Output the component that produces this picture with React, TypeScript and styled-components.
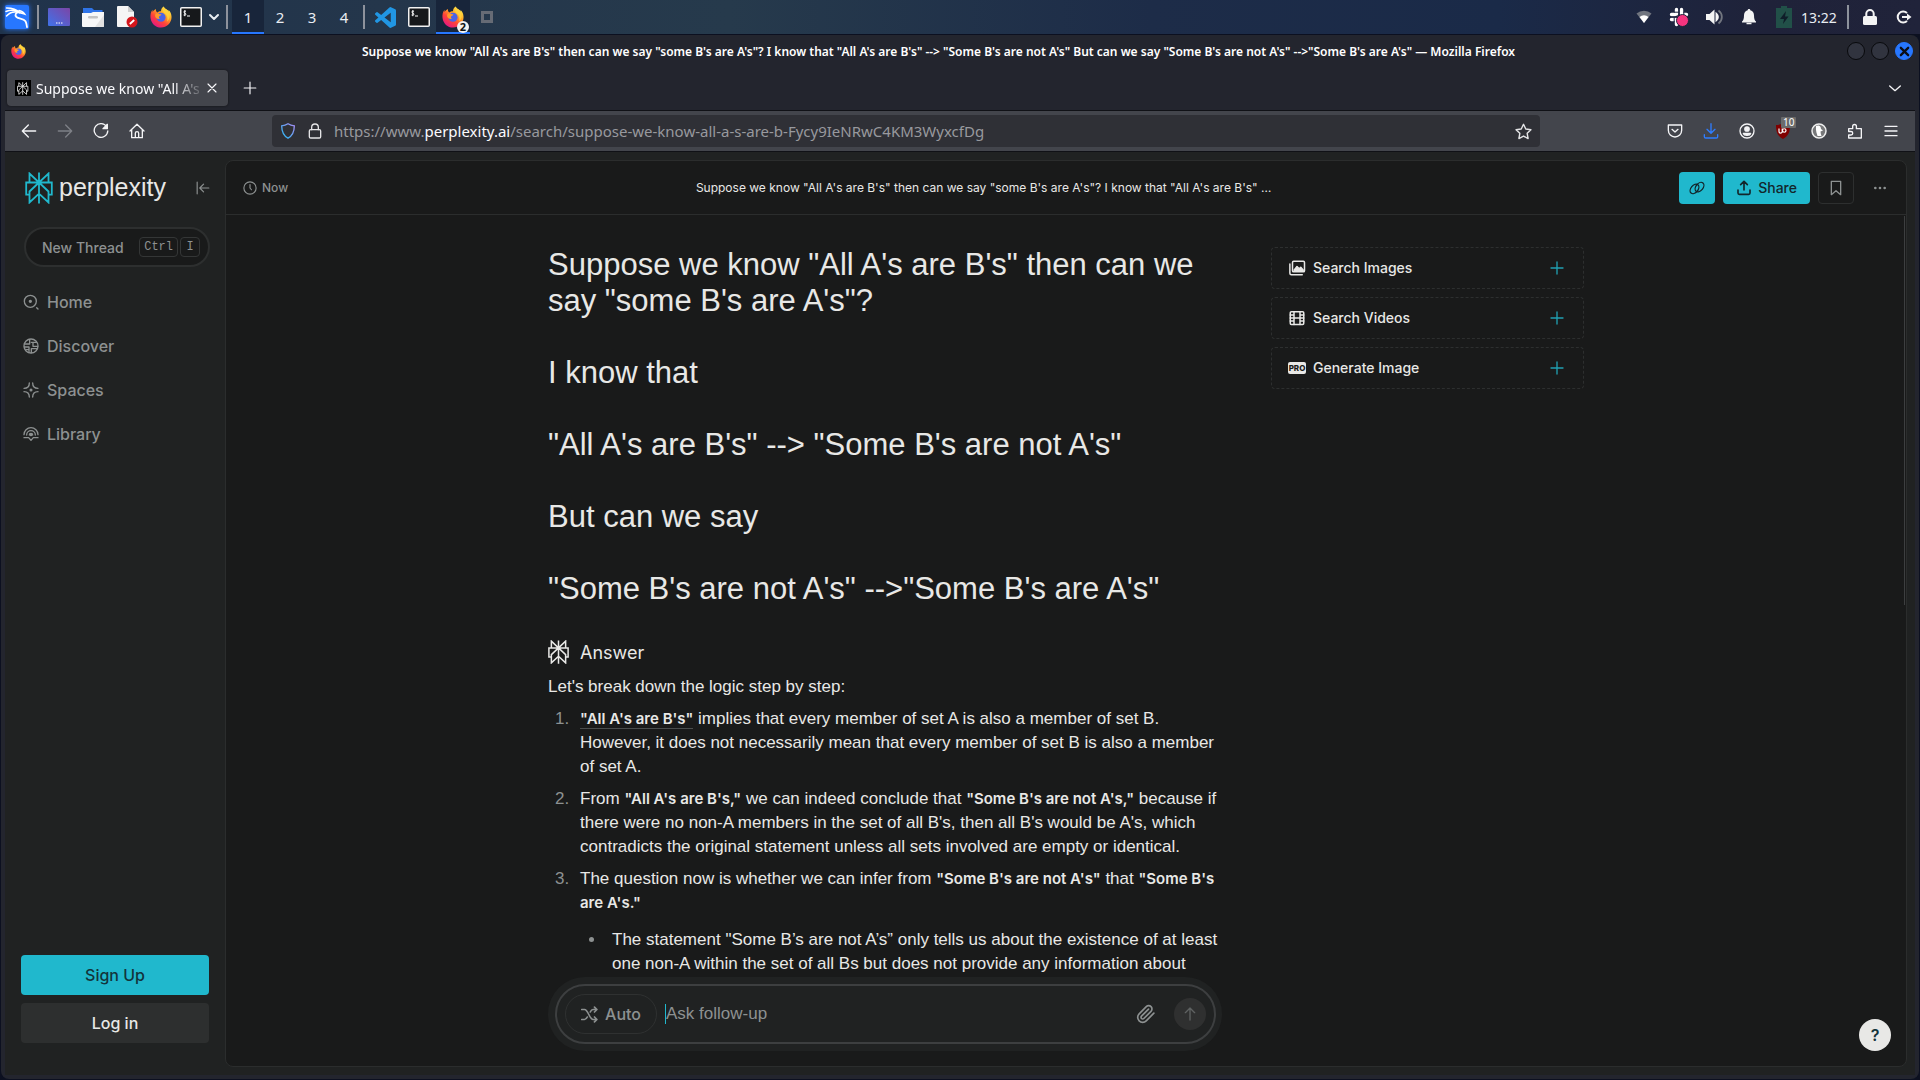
import React from "react";
import styled, { createGlobalStyle } from "styled-components";

const UI = `"Noto Sans", sans-serif`;
const APP = `Inter, "Liberation Sans", sans-serif`;
const TEXT = `"Liberation Sans", Inter, sans-serif`;

const Global = createGlobalStyle`
  * { box-sizing: border-box; }
  body { margin: 0; background: #0c1020; overflow: hidden; }
  button, input { font: inherit; color: inherit; }
  button { background: none; border: 0; padding: 0; cursor: pointer; }
  h1, h2, p, ol, ul { margin: 0; padding: 0; font-weight: 400; }
  svg { display: block; flex: none; }
`;

const Desktop = styled.div`
  display: flex;
  flex-direction: column;
  height: 100vh;
  font-family: ${UI};
`;

/* ---------- system panel ---------- */
const Panel = styled.header`
  display: flex;
  flex: none;
  height: 34px;
  background: linear-gradient(90deg, #20334b 0%, #24364b 20%, #263a4c 38%, #1d2c48 60%, #1a2a48 78%, #1f2239 92%, #20233a 100%);
  color: #e9edf2;
  font-size: 15px;
`;
const Slot = styled.button<{ $w?: number; $active?: boolean }>`
  display: flex;
  align-items: center;
  justify-content: center;
  width: ${(p) => p.$w ?? 34}px;
  height: 34px;
  background: ${(p) => (p.$active ? "#18253a" : "none")};
  border-bottom: 2px solid ${(p) => (p.$active ? "#2777ff" : "transparent")};
  border-top: 2px solid transparent;
`;
const Divider = styled.span<{ $w: number }>`
  display: flex;
  align-items: center;
  justify-content: center;
  width: ${(p) => p.$w}px;
  &::before {
    content: "";
    width: 2px;
    height: 24px;
    background: #8d929c;
  }
`;
const Spacer = styled.div`
  flex: 1;
`;
const Clock = styled.time`
  display: flex;
  align-items: center;
  width: 43px;
  font-size: 14px;
`;
const KaliTile = styled.span`
  display: flex;
  align-items: center;
  justify-content: center;
  width: 24px;
  height: 24px;
  border-radius: 2px;
  background: #2777ff;
  box-shadow: 0 0 5px #2777ff;
  color: #fff;
`;
const Badged = styled.span`
  position: relative;
`;
const Count = styled.span`
  position: absolute;
  right: -5px;
  bottom: -5px;
  width: 12px;
  height: 12px;
  border-radius: 6px;
  background: #f2f2f2;
  color: #111;
  font-size: 11px;
  line-height: 12px;
  font-weight: 700;
  text-align: center;
`;

/* ---------- browser window ---------- */
const Window = styled.div`
  display: flex;
  flex-direction: column;
  flex: 1;
  min-height: 0;
  margin: 1px;
  padding: 0 4px 4px;
  border-radius: 8px;
  background: #23252e;
`;
const TitleBar = styled.div`
  display: flex;
  align-items: center;
  height: 32px;
  flex: none;
  padding: 0 2px 0 6px;
`;
const WindowTitle = styled.div`
  flex: 1;
  margin-left: 4px;
  text-align: center;
  color: #fff;
  font-size: 12px;
  font-weight: 600;
  white-space: nowrap;
`;
const WinButtons = styled.div`
  display: flex;
  gap: 6px;
`;
const WinButton = styled.button<{ $close?: boolean }>`
  display: flex;
  align-items: center;
  justify-content: center;
  width: 18px;
  height: 18px;
  border-radius: 9px;
  border: 1px solid ${(p) => (p.$close ? "#2777ff" : "#08090c")};
  background: ${(p) => (p.$close ? "#2777ff" : "#31343f")};
  color: #0b0d14;
`;
const TabStrip = styled.div`
  display: flex;
  align-items: center;
  flex: none;
  height: 43px;
  padding: 0 2px 1px;
`;
const Tab = styled.div`
  display: flex;
  align-items: center;
  width: 221px;
  height: 36px;
  margin-right: 4px;
  padding: 0 8px;
  gap: 5px;
  border-radius: 4px;
  background: #43454c;
  box-shadow: 0 0 2px #111;
  color: #fbfbfe;
  font-size: 14px;
`;
const Favicon = styled.span`
  display: flex;
  align-items: center;
  justify-content: center;
  width: 16px;
  height: 16px;
  background: #000;
  color: #eee;
`;
const TabLabel = styled.span`
  flex: 1;
  overflow: hidden;
  white-space: nowrap;
  mask-image: linear-gradient(90deg, #000 84%, rgba(0, 0, 0, 0.2));
`;
const BarButton = styled.button`
  display: flex;
  align-items: center;
  justify-content: center;
  width: 36px;
  height: 36px;
  color: #f4f4f6;
  &:disabled { color: #7e8087; }
`;
const ToolBar = styled.nav`
  display: flex;
  align-items: center;
  flex: none;
  height: 42px;
  padding: 0 6px;
  border-top: 1px solid #101116;
  border-bottom: 1px solid #101116;
  background: #43454c;
`;
const UrlBox = styled.div`
  display: flex;
  align-items: center;
  flex: 1;
  height: 32px;
  margin: 0 117px;
  padding: 0 8px;
  gap: 11px;
  border-radius: 4px;
  background: #2f3036;
  color: #e4e4e6;
`;
const Url = styled.div`
  flex: 1;
  color: #98999e;
  font-size: 15px;
  b { font-weight: 400; color: #fbfbfe; }
`;
const UBadge = styled.span`
  position: absolute;
  left: 5px;
  top: -6px;
  padding: 0 2px;
  border-radius: 1px;
  background: #6b6b6b;
  color: #fff;
  font-size: 10px;
  line-height: 11px;
`;
const Blue = styled.span`
  color: #2f7dff;
`;

/* ---------- site ---------- */
const Site = styled.div`
  display: flex;
  flex: 1;
  min-height: 0;
  background: #202222;
  color: #e8e8e6;
  font-family: ${APP};
`;
const Sidebar = styled.aside`
  display: flex;
  flex-direction: column;
  width: 220px;
  flex: none;
  padding: 18px 15px 32px 16px;
  color: #8d9191;
`;
const Brand = styled.div`
  display: flex;
  align-items: center;
  height: 36px;
  padding: 0 0 0 4px;
  gap: 6px;
  color: #20b8cd;
`;
const Wordmark = styled.span`
  flex: 1;
  color: #e8e8e6;
  font-family: ${TEXT};
  font-size: 25px;
  line-height: 30px;
  padding-bottom: 2px;
`;
const Side = styled.button`
  color: #8d9191;
`;
const NewThread = styled.button`
  display: flex;
  align-items: center;
  height: 40px;
  margin: 21px 0 13px 3px;
  padding: 0 8px 0 16px;
  gap: 2px;
  border: 2px solid #2d2f2f;
  border-radius: 20px;
  background: #191a1a;
  font-size: 14px;
  font-weight: 500;
  text-align: left;
`;
const ThreadLabel = styled.span`
  flex: 1;
`;
const Key = styled.kbd`
  min-width: 20px;
  height: 20px;
  padding: 0 4px;
  border: 1px solid #343636;
  border-radius: 4px;
  font: 12px/18px "Liberation Mono", monospace;
  text-align: center;
`;
const NavLink = styled.a`
  display: flex;
  align-items: center;
  height: 44px;
  padding-left: 2px;
  gap: 8px;
  color: inherit;
  font-size: 16px;
  font-weight: 500;
  text-decoration: none;
`;
const AuthButton = styled.button<{ $primary?: boolean }>`
  height: 40px;
  margin: 8px 1px 0 0;
  border-radius: 4px;
  background: ${(p) => (p.$primary ? "#20b8cd" : "#2d2f2f")};
  color: ${(p) => (p.$primary ? "#13343b" : "#e8e8e6")};
  font-size: 16px;
  font-weight: 500;
`;
const Main = styled.main`
  position: relative;
  display: flex;
  flex-direction: column;
  flex: 1;
  min-width: 0;
  margin: 8px 8px 8px 0;
  border: 1px solid #2b2d2d;
  border-radius: 8px;
  background: #191a1a;
  overflow: hidden;
`;
const Head = styled.div`
  display: flex;
  align-items: center;
  justify-content: space-between;
  flex: none;
  height: 54px;
  padding: 0 8px 0 17px;
  border-bottom: 1px solid #2b2d2d;
  font-size: 12px;
  font-weight: 500;
`;
const ThreadTitle = styled.span`
  font-weight: 400;
`;
const When = styled.span`
  display: flex;
  align-items: center;
  gap: 5px;
  color: #8d9191;
`;
const Actions = styled.div`
  display: flex;
  gap: 8px;
`;
const Action = styled.button<{ $primary?: boolean; $outline?: boolean; $wide?: boolean }>`
  display: flex;
  align-items: center;
  justify-content: center;
  gap: 6px;
  min-width: 36px;
  height: 32px;
  padding: 0 ${(p) => (p.$wide ? 13 : 8)}px;
  border: ${(p) => (p.$outline ? "1px solid #2d2f2f" : "0")};
  border-radius: 4px;
  background: ${(p) => (p.$primary ? "#20b8cd" : "transparent")};
  color: ${(p) => (p.$primary ? "#13262b" : "#8d9191")};
  font-size: 14px;
  font-weight: 500;
`;
const Scroll = styled.div`
  flex: 1;
  min-height: 0;
  overflow: hidden;
  padding: 32px 32px 0;
`;
const Columns = styled.div`
  display: grid;
  grid-template-columns: minmax(0, 674fr) minmax(0, 313fr);
  gap: 49px;
  max-width: 1036px;
  margin: 0 auto;
  align-items: start;
`;
const Question = styled.h1`
  font-family: ${TEXT};
  font-size: 31px;
  line-height: 36px;
  white-space: pre-line;
`;
const AnswerHead = styled.h2`
  display: flex;
  align-items: center;
  gap: 11px;
  height: 28px;
  margin: 31px 0 9px;
  font-size: 18px;
`;
const Prose = styled.div`
  font-family: ${TEXT};
  font-size: 17px;
  line-height: 24px;
  strong {
    font-family: ${APP};
    font-size: 15px;
    font-weight: 600;
    line-height: 20px;
  }
`;
const Steps = styled.ol`
  padding-left: 26px;
  li { margin-top: 8px; padding-left: 6px; }
  li::marker { color: #8d9191; }
`;
const Points = styled.ul`
  margin-top: 13px;
  padding-left: 26px;
  list-style: disc;
  li { margin: 0; }
`;
const Term = styled.strong`
  border-bottom: 1px solid #4a4d4d;
`;
const Cards = styled.div`
  display: flex;
  flex-direction: column;
  gap: 8px;
`;
const Card = styled.button`
  display: flex;
  align-items: center;
  height: 42px;
  padding: 0 18px 1px 16px;
  gap: 7px;
  border: 1px dashed #2d2f2f;
  border-radius: 4px;
  font-size: 14px;
  font-weight: 500;
  text-align: left;
  span { flex: 1; }
`;
const Accent = styled.i`
  color: #20a0b2;
`;
const ProTag = styled.b`
  width: 18px;
  border-radius: 2px;
  background: #e8e8e6;
  color: #191a1a;
  font-size: 8px;
  line-height: 12px;
  font-weight: 800;
  text-align: center;
`;
const Dock = styled.div`
  position: absolute;
  left: 32px;
  right: 32px;
  bottom: 15px;
`;
const DockInner = styled.div`
  display: grid;
  grid-template-columns: minmax(0, 674fr) minmax(0, 313fr);
  gap: 49px;
  max-width: 1036px;
  margin: 0 auto;
`;
const Halo = styled.div`
  padding: 7px 6px 7px 7px;
  border-radius: 37px;
  background: #202222;
`;
const Composer = styled.form`
  display: flex;
  align-items: center;
  height: 60px;
  padding: 0 8px;
  border: 2px solid #3d3f40;
  border-radius: 30px;
  background: #202222;
  color: #8d9191;
`;
const Mode = styled.button`
  display: flex;
  align-items: center;
  justify-content: center;
  gap: 7px;
  width: 92px;
  height: 40px;
  border: 1px solid #2f3131;
  border-radius: 20px;
  font-size: 16px;
  font-weight: 500;
`;
const Caret = styled.span`
  width: 1px;
  height: 20px;
  margin-left: 8px;
  background: #20b8cd;
`;
const Ask = styled.input`
  flex: 1;
  min-width: 0;
  padding: 0;
  border: 0;
  outline: 0;
  background: none;
  font-family: ${TEXT};
  font-size: 17px;
  &::placeholder { color: #8d9191; opacity: 1; }
`;
const Attach = styled.button`
  margin-right: 18px;
`;
const Send = styled.button`
  display: flex;
  align-items: center;
  justify-content: center;
  width: 32px;
  height: 32px;
  border-radius: 16px;
  background: #2f3030;
  color: #5f6262;
`;
const Help = styled.button`
  position: absolute;
  right: 15px;
  bottom: 15px;
  width: 32px;
  height: 32px;
  border-radius: 16px;
  background: #e8e8e6;
  color: #13343b;
  font-size: 16px;
  font-weight: 600;
`;
const Thumb = styled.div`
  position: absolute;
  right: 1px;
  top: 55px;
  width: 1px;
  height: 43%;
  background: #3d3f40;
`;

/* ---------- icons ---------- */
const Icon = ({ s = 16, w = 2, vb = 24, children }: { s?: number; w?: number; vb?: number; children: React.ReactNode }) => (
  <svg width={s} height={s} viewBox={`0 0 ${vb} ${vb}`} fill="none" stroke="currentColor" strokeWidth={w} strokeLinecap="round" strokeLinejoin="round" aria-hidden="true">
    {children}
  </svg>
);
const Mark = ({ h, w = 1.8 }: { h: number; w?: number }) => (
  <svg width={(h * 28) / 32} height={h} viewBox="0 0 28 32" fill="none" stroke="currentColor" strokeWidth={w} aria-hidden="true">
    <path d="M14 .5v31M4.500 10.500V1.500L14 10.500l9.500-9v9M14 10.500H1.200v12.200h3.300M14 10.500h12.800v12.200h-3.300M14 10.500l-9.500 9v11l9.500-8.800M14 10.500l9.500 9v11L14 21.700" />
  </svg>
);
const Firefox = ({ s }: { s: number }) => (
  <svg width={s} height={s} viewBox="0 0 24 24" aria-hidden="true">
    <defs>
      <linearGradient id="ffa" x1="0.85" y1="0.05" x2="0.2" y2="0.95">
        <stop offset="0" stopColor="#fff44f" />
        <stop offset=".35" stopColor="#ffa726" />
        <stop offset=".65" stopColor="#ff4438" />
        <stop offset="1" stopColor="#e31587" />
      </linearGradient>
    </defs>
    <path fill="url(#ffa)" d="M15 .5c-2.400 1.500-3 3.500-3 5.100-1.700 0-3 .5-4 1.400C6.600 6.500 6.300 4.600 6.500 3.300 4.500 4.200 3.400 5.700 2.900 6.600c-.2-.9-.2-1.700-.1-2.500C.8 6.300.2 10 .6 13c.7 6 5.600 10.500 11.400 10.500 6.300 0 11.500-5.100 11.500-11.500 0-3.500-1.400-6.700-3.700-8 .7 1.100 1 2.100 1.100 2.900C19.500 3.500 15.800 3.400 15 .5z" />
    <circle cx="12" cy="12.300" r="5" fill="#4a63e8" />
    <path fill="#ff9a2b" d="M6 8.500c1.200-.9 3-.8 4.100.1 1 .2 2.500.3 2.400.8-.2.900-1.500 1.300-2.300 1.900-.8.700-.6 1.900.6 2.700-2.300.6-5-.8-5.300-3.100z" />
    <path fill="#ffd23d" opacity=".85" d="M15 .5c.8 2.900 4.500 3 5.900 6.400 1.300 4 .5 8-2.500 10.300 1.400-3.200.3-6.800-1.900-8.700-2.200-1.700-3.600-4.700-1.500-8z" />
  </svg>
);
const Terminal = () => (
  <svg width="22" height="20" viewBox="0 0 22 20" aria-hidden="true">
    <rect x=".75" y=".75" width="20.500" height="18.500" rx="1" fill="#16181b" stroke="#f2f2f2" strokeWidth="1.500" />
    <path d="M6 4.300c-2.300-.8-3 1.200-1.200 1.800 1.900.6 1.200 2.700-1.200 1.900M4.800 3.200v6" stroke="#fff" fill="none" />
    <path d="M7 9h3" stroke="#fff" />
  </svg>
);
const Plus = () => (
  <Accent><Icon s={16} w={2}><path d="M12 3v18M3 12h18" /></Icon></Accent>
);

function SystemPanel() {
  return (
    <Panel>
      <Slot aria-label="Applications">
        <KaliTile>
          <svg width="24" height="24" viewBox="0 0 24 24" fill="none" stroke="currentColor" strokeLinecap="round">
            <path strokeWidth="1.500" d="M1.500 3c5 0 9.500.5 13 4.500M1 6.500C5 4.800 9 5 12 6.500M1.500 11c2.500-3 6-4.500 10-4" />
            <path strokeWidth="1.800" d="M14.500 7.500c-4-.5-5 2.500-3 4.500 2.300 2.200 7 .8 9 4.200 1 1.800 1.300 3.800 1.500 6" />
            <path strokeWidth="1.600" d="M14 5.500c2.500.3 4 1.200 5.500 3.500-1.500-.5-3.500-.7-5-1.500" />
          </svg>
        </KaliTile>
      </Slot>
      <Divider $w={8} />
      <Slot aria-label="Desktop">
        <svg width="22" height="18" viewBox="0 0 22 18">
          <defs><linearGradient id="dk" x1="0" y1="1" x2="1" y2="0"><stop stopColor="#3f73ea" /><stop offset="1" stopColor="#7c45a6" /></linearGradient></defs>
          <rect width="22" height="18" rx="1" fill="url(#dk)" />
          <path d="M8 15h1.500M10.500 15H12M13 15h1.500" stroke="#fff" />
        </svg>
      </Slot>
      <Slot aria-label="Files">
        <svg width="22" height="20" viewBox="0 0 22 20">
          <path d="M1 1h9l2 2h8.500v4H1z" fill="#2f74e8" />
          <path d="M0 6h9l2-1h11v14a1 1 0 0 1-1 1H1a1 1 0 0 1-1-1z" fill="#f7f7f7" />
          <path d="M22 8v11a1 1 0 0 1-1 1h-8z" fill="#e2e2e2" />
          <rect x="6" y="9" width="10" height="2.500" rx="1.200" fill="#c4c4c4" />
        </svg>
      </Slot>
      <Slot $w={35} aria-label="Text editor">
        <svg width="21" height="22" viewBox="0 0 21 22">
          <path d="M0 1a1 1 0 0 1 1-1h10l6 6v15H1a1 1 0 0 1-1-1z" fill="#f5f5f5" />
          <path d="M11 0l6 6h-6z" fill="#cfcfcf" />
          <circle cx="15" cy="16" r="5.500" fill="#d5161c" />
          <path d="M12.800 18l4.400-4" stroke="#fff" strokeWidth="1.800" />
        </svg>
      </Slot>
      <Slot $w={31} aria-label="Firefox"><Firefox s={22} /></Slot>
      <Slot $w={30} aria-label="Terminal"><Terminal /></Slot>
      <Slot $w={16} aria-label="More terminals"><Icon s={12} w={4}><path d="M4 8l8 8 8-8" /></Icon></Slot>
      <Divider $w={10} />
      <Slot $w={32} $active>1</Slot>
      <Slot $w={32}>2</Slot>
      <Slot $w={32}>3</Slot>
      <Slot $w={32}>4</Slot>
      <Divider $w={8} />
      <Slot aria-label="Visual Studio Code">
        <svg width="21" height="21" viewBox="0 0 24 24">
          <path fill="#2196e3" d="M23.150 2.587L18.210.21a1.494 1.494 0 0 0-1.705.29l-9.460 8.630-4.120-3.128a.999.999 0 0 0-1.276.057L.327 7.261A1 1 0 0 0 .326 8.740L3.899 12 .326 15.260a1 1 0 0 0 .001 1.479L1.650 17.940a.999.999 0 0 0 1.276.057l4.120-3.128 9.460 8.630a1.492 1.492 0 0 0 1.704.29l4.942-2.377A1.500 1.500 0 0 0 24 20.060V3.939a1.500 1.500 0 0 0-.85-1.352zm-5.146 14.861L10.826 12l7.178-5.448v10.896z" />
        </svg>
      </Slot>
      <Slot aria-label="Terminal window"><Terminal /></Slot>
      <Slot $active aria-label="Firefox windows"><Badged><Firefox s={22} /><Count>2</Count></Badged></Slot>
      <Slot aria-label="Window">
        <svg width="12" height="12"><rect x="1.500" y="1.500" width="9" height="9" fill="none" stroke="#666b75" strokeWidth="3" /></svg>
      </Slot>
      <Spacer />
      <Slot $w={35} aria-label="Network">
        <svg width="16" height="14" viewBox="0 0 16 14"><path d="M8 13L.5 3.500a12 12 0 0 1 15 0z" fill="#70757f" /><path d="M8 13L3.500 7a7 7 0 0 1 9 0z" fill="#fff" /></svg>
      </Slot>
      <Slot $w={35} aria-label="Slack">
        <svg width="20" height="20" viewBox="0 0 20 20">
          <g stroke="#fff" strokeWidth="3.400" strokeLinecap="round"><path d="M7.500 2.500v4.500M12.500 2.500V7M2.500 7.500H6M2.500 12.500H7.500M12.500 7.500h5M7.500 14v3.500" /></g>
          <g stroke="#1c2440" strokeWidth="1"><path d="M10 1v9M1 10h9M5 5.200h5M14.800 5v5M5.200 10v5" /></g>
          <circle cx="13.500" cy="13.500" r="6" fill="#f5347f" stroke="#20233a" />
        </svg>
      </Slot>
      <Slot $w={35} aria-label="Volume">
        <svg width="18" height="18" viewBox="0 0 18 18"><path d="M1 6h3.500L9.500 1.500v15L4.500 12H1z" fill="#f4f4f4" /><path d="M11.500 6a4 4 0 0 1 0 6z" stroke="#f4f4f4" strokeWidth="2" fill="none" /><path d="M13.500 2.500a8 8 0 0 1 0 13" stroke="#72767f" strokeWidth="1.800" fill="none" /></svg>
      </Slot>
      <Slot $w={35} aria-label="Notifications">
        <svg width="14" height="16" viewBox="0 0 14 16"><path d="M7 0c1 0 1.300.7 1.300 1.300C11 2 12 4 12 6.500c0 3.500.8 5 2 6v1H0v-1c1.200-1 2-2.500 2-6C2 4 3 2 5.700 1.300 5.700.7 6 0 7 0z" fill="#f4f4f4" /><path d="M4.500 14.500h5" stroke="#f4f4f4" strokeWidth="1.500" /></svg>
      </Slot>
      <Slot $w={35} aria-label="Battery">
        <svg width="16" height="22" viewBox="0 0 16 22"><path d="M5 0h6v2h5v20H0V2h5z" fill="#215048" /><path d="M10 5l-6 8h4l-1 5 5.500-7.500H9z" fill="#0f1d29" /></svg>
      </Slot>
      <Clock>13:22</Clock>
      <Divider $w={8} />
      <Slot $w={35} aria-label="Lock screen">
        <svg width="14" height="16" viewBox="0 0 14 16"><rect y="7" width="14" height="9" rx="1.500" fill="#f4f4f4" /><path d="M3.300 8V4.700a3.700 3.700 0 0 1 7.400 0V8" fill="none" stroke="#f4f4f4" strokeWidth="2" /></svg>
      </Slot>
      <Slot $w={33} aria-label="Log out">
        <svg width="16" height="14" viewBox="0 0 16 14"><path d="M11 3A5.500 5.500 0 1 0 11 11" fill="none" stroke="#f4f4f4" strokeWidth="2" /><path d="M6 7h6" stroke="#f4f4f4" strokeWidth="2" /><path d="M11 3.500L15.500 7 11 10.500z" fill="#f4f4f4" /></svg>
      </Slot>
    </Panel>
  );
}

function BrowserChrome() {
  return (
    <>
      <TitleBar>
        <Firefox s={15} />
        <WindowTitle>
          {`Suppose we know "All A's are B's" then can we say "some B's are A's"? I know that "All A's are B's" --> "Some B's are not A's" But can we say "Some B's are not A's" -->"Some B's are A's" — Mozilla Firefox`}
        </WindowTitle>
        <WinButtons>
          <WinButton aria-label="Minimize" />
          <WinButton aria-label="Maximize" />
          <WinButton $close aria-label="Close window"><Icon s={11} w={5}><path d="M4 4l16 16M20 4L4 20" /></Icon></WinButton>
        </WinButtons>
      </TitleBar>
      <TabStrip>
        <Tab>
          <Favicon><Mark h={13} w={2} /></Favicon>
          <TabLabel>Suppose we know "All A's</TabLabel>
          <button aria-label="Close tab"><Icon s={16} w={1.700}><path d="M6 6l12 12M18 6L6 18" /></Icon></button>
        </Tab>
        <BarButton aria-label="New tab"><Icon s={14} w={2}><path d="M12 2v20M2 12h20" /></Icon></BarButton>
        <Spacer />
        <BarButton aria-label="List all tabs"><Icon s={16} w={2}><path d="M4 9l8 7 8-7" /></Icon></BarButton>
      </TabStrip>
      <ToolBar>
        <BarButton aria-label="Back"><Icon s={16}><path d="M22 12H3M11 3l-9 9 9 9" /></Icon></BarButton>
        <BarButton aria-label="Forward" disabled><Icon s={16}><path d="M2 12h19M13 3l9 9-9 9" /></Icon></BarButton>
        <BarButton aria-label="Reload"><Icon s={16}><path d="M20.500 5.500A10.200 10.200 0 1 0 22.200 12" /><path fill="currentColor" d="M21.500 2v6.500H15z" /></Icon></BarButton>
        <BarButton aria-label="Home"><Icon s={16}><path d="M1.500 12L12 1.800 22.500 12M4 10v12h16V10M9.500 22v-6.500a2.500 2.500 0 0 1 5 0V22" /></Icon></BarButton>
        <UrlBox>
          <svg width="16" height="16" viewBox="0 0 24 24" fill="none" strokeWidth="2" aria-hidden="true">
            <defs><linearGradient id="sh" x1="0" y1="1" x2="1" y2="0"><stop stopColor="#22b8f0" /><stop offset="1" stopColor="#a98cf5" /></linearGradient></defs>
            <path stroke="url(#sh)" d="M12 1.200c3 2 6 2.800 9.500 3-.1 9-2.500 15-9.500 18.600C5 19.200 2.600 13.200 2.500 4.200 6 4 9 3.200 12 1.200z" />
          </svg>
          <Icon s={16}><rect x="3.500" y="10" width="17" height="12.500" rx="2" /><path d="M7 10V6.500a5 5 0 0 1 10 0V10" /></Icon>
          <Url>https://www.<b>perplexity.ai</b>/search/suppose-we-know-all-a-s-are-b-Fycy9IeNRwC4KM3WyxcfDg</Url>
          <button aria-label="Bookmark this page"><Icon s={17}><path d="M12 1.800l3.200 6.700 7.300 1-5.300 5.100 1.300 7.300-6.500-3.500-6.500 3.500 1.300-7.300L1.500 9.500l7.300-1z" /></Icon></button>
        </UrlBox>
        <BarButton aria-label="Save to Pocket"><Icon s={16}><path d="M2 3h20v8a10 10 0 0 1-20 0zM7.500 9.500l4.500 4 4.500-4" /></Icon></BarButton>
        <BarButton aria-label="Downloads"><Blue><Icon s={16}><path d="M12 1v14M6 9.500l6 6 6-6M2 17.500v3a2 2 0 0 0 2 2h16a2 2 0 0 0 2-2v-3" /></Icon></Blue></BarButton>
        <BarButton aria-label="Account"><Icon s={16}><circle cx="12" cy="12" r="10.500" /><circle cx="12" cy="9" r="3.300" fill="currentColor" /><path fill="currentColor" d="M6.500 15.500h11c-1 4-10 4-11 0z" /></Icon></BarButton>
        <BarButton aria-label="uBlock Origin">
          <Badged>
            <svg width="14" height="16" viewBox="0 0 14 16"><path d="M7 0c2 1.400 4.500 2 7 2 0 7-1.500 11-7 14C1.500 13 0 9 0 2c2.500 0 5-.6 7-2z" fill="#800000" /><path d="M3 5.500v3a1.600 1.600 0 0 0 3.200 0v-3M6.500 7.500a1.700 1.700 0 1 0 3.500 0 1.700 1.700 0 0 0-3.500 0" fill="none" stroke="#fff" strokeWidth="1.200" /></svg>
            <UBadge>10</UBadge>
          </Badged>
        </BarButton>
        <BarButton aria-label="Privacy Essentials">
          <svg width="16" height="16" viewBox="0 0 16 16"><circle cx="8" cy="8" r="7" fill="#77787a" stroke="#eee" strokeWidth="1.500" /><path d="M5 3c3-1.500 5 0 5 3l2 1.500-2.500 1c0 1.500.5 3 1 4.500H6.500C6 11 4.500 8 5 3z" fill="#fff" /></svg>
        </BarButton>
        <BarButton aria-label="Extensions"><Icon s={16}><path d="M2.500 8.500h6V5a2.800 2.800 0 1 1 5.600 0v3.500H21.500v14H2.500v-4.500H6a2.600 2.600 0 1 0 0-5.200H2.500z" /></Icon></BarButton>
        <BarButton aria-label="Menu"><Icon s={16}><path d="M3 5h18M3 12h18M3 19h18" /></Icon></BarButton>
      </ToolBar>
    </>
  );
}

const NAV = [
  { label: "Home", icon: <><circle cx="11" cy="11" r="9" /><circle cx="11" cy="11" r="1.500" fill="currentColor" /><path d="M20.500 20.500l2 2" /></> },
  { label: "Discover", icon: <><circle cx="12" cy="12" r="10.500" /><path d="M2 9h8V2M12.500 6.500h7.500M15 7v5.500M15 12.500h7M12.500 22v-6H21M9 21.500v-8M2 13.500h7M5 17.500h4" /></> },
  { label: "Spaces", icon: <><path d="M9.500 1.500C9.500 6.500 6.500 9.500 1.500 9.500M14.500 1.500c0 5 3 8 8 8M9.500 22.500c0-5-3-8-8-8M14.500 22.500c0-5 3-8 8-8" /><circle cx="12" cy="12" r="1.300" fill="currentColor" /></> },
  { label: "Library", icon: <><path d="M1.500 13a10.500 10.500 0 0 1 21 0M5.500 13.500a6.500 6.500 0 0 1 13 0M1.500 17.500h7l3.500 4 3.500-4h7M9.500 13.500a2.500 2.500 0 1 1 5 0" /><circle cx="12" cy="13.500" r="1" fill="currentColor" /></> },
];

export default function App() {
  return (
    <Desktop>
      <Global />
      <SystemPanel />
      <Window>
        <BrowserChrome />
        <Site>
          <Sidebar>
            <Brand>
              <Mark h={32} />
              <Wordmark>perplexity</Wordmark>
              <Side aria-label="Collapse sidebar"><Icon s={14} w={2}><path d="M2 2v20M22 12H7M13 5.500L6.500 12l6.500 6.500" /></Icon></Side>
            </Brand>
            <NewThread>
              <ThreadLabel>New Thread</ThreadLabel>
              <Key>Ctrl</Key>
              <Key>I</Key>
            </NewThread>
            {NAV.map((n) => (
              <NavLink href="#" key={n.label}><Icon s={16}>{n.icon}</Icon>{n.label}</NavLink>
            ))}
            <Spacer />
            <AuthButton $primary>Sign Up</AuthButton>
            <AuthButton>Log in</AuthButton>
          </Sidebar>
          <Main>
            <Head>
              <When><Icon s={14} w={2}><circle cx="12" cy="12" r="10.500" /><path d="M12 6v6l2.500 3" /></Icon>Now</When>
              <ThreadTitle>{`Suppose we know "All A's are B's" then can we say "some B's are A's"? I know that "All A's are B's" …`}</ThreadTitle>
              <Actions>
                <Action $primary aria-label="Copy link">
                  <Icon s={16} w={2}><g transform="rotate(-50 12 12)"><ellipse cx="8.500" cy="10" rx="8" ry="5.300" /><ellipse cx="15.500" cy="14" rx="8" ry="5.300" /></g></Icon>
                </Action>
                <Action $primary $wide><Icon s={16} w={2.500}><path d="M12 15V2.500M7 7l5-5 5 5M3 15v4.500a2 2 0 0 0 2 2h14a2 2 0 0 0 2-2V15" /></Icon>Share</Action>
                <Action $outline aria-label="Bookmark"><Icon s={16} w={2}><path d="M5 2h14v20l-7-6-7 6z" /></Icon></Action>
                <Action aria-label="More"><Icon s={16} w={2}><circle cx="5" cy="12" r="1" /><circle cx="12" cy="12" r="1" /><circle cx="19" cy="12" r="1" /></Icon></Action>
              </Actions>
            </Head>
            <Scroll>
              <Columns>
                <article>
                  <Question>{`Suppose we know "All A's are B's" then can we say "some B's are A's"?\n\nI know that\n\n"All A's are B's" --> "Some B's are not A's"\n\nBut can we say\n\n"Some B's are not A's" -->"Some B's are A's"`}</Question>
                  <AnswerHead><Mark h={24} w={2} />Answer</AnswerHead>
                  <Prose>
                    <p>Let's break down the logic step by step:</p>
                    <Steps>
                      <li><Term>"All A's are B's"</Term> implies that every member of set A is also a member of set B. However, it does not necessarily mean that every member of set B is also a member of set A.</li>
                      <li>From <strong>"All A's are B's,"</strong> we can indeed conclude that <strong>"Some B's are not A's,"</strong> because if there were no non-A members in the set of all B's, then all B's would be A's, which contradicts the original statement unless all sets involved are empty or identical.</li>
                      <li>
                        The question now is whether we can infer from <strong>"Some B's are not A's"</strong> that <strong>"Some B's are A's."</strong>
                        <Points>
                          <li>The statement "Some B’s are not A’s” only tells us about the existence of at least one non-A within the set of all Bs but does not provide any information about</li>
                        </Points>
                      </li>
                    </Steps>
                  </Prose>
                </article>
                <Cards>
                  <Card>
                    <Icon s={18} w={2}><rect x="6" y="3" width="16" height="14" rx="1.500" /><path fill="currentColor" d="M8 15l4-5 3 3 2-2 3.500 4z" /><path d="M2.500 6.500V19a2 2 0 0 0 2 2H19" /></Icon>
                    <span>Search Images</span><Plus />
                  </Card>
                  <Card>
                    <Icon s={18} w={2}><rect x="3" y="3.500" width="18" height="17" rx="1.500" /><path d="M8 3.500v17M16 3.500v17M8 12h8M3 8h5M3 12h5M3 16h5M16 8h5M16 12h5M16 16h5" /></Icon>
                    <span>Search Videos</span><Plus />
                  </Card>
                  <Card><ProTag>PRO</ProTag><span>Generate Image</span><Plus /></Card>
                </Cards>
              </Columns>
            </Scroll>
            <Thumb />
            <Dock>
              <DockInner>
                <Halo>
                  <Composer>
                    <Mode type="button"><Icon s={17} w={2.300}><path d="M1 5h4c5 0 7 14 12 14h5M19 15.500l3.500 3.500-3.500 3.500M1 19h4c1.800 0 3-1.500 4-3.500M13 8.500C14 6.500 15.200 5 17 5h5M19 1.500L22.500 5 19 8.500" /></Icon>Auto</Mode>
                    <Caret />
                    <Ask aria-label="Ask follow-up" placeholder="Ask follow-up" />
                    <Attach type="button" aria-label="Attach file"><Icon s={20} w={2}><path d="M21.440 11.050l-9.190 9.190a6 6 0 0 1-8.490-8.490l8.570-8.570A4 4 0 1 1 18 8.840l-8.590 8.570a2 2 0 0 1-2.830-2.830l8.490-8.480" /></Icon></Attach>
                    <Send type="submit" aria-label="Send"><Icon s={16} w={2}><path d="M12 21V3M5 10l7-7 7 7" /></Icon></Send>
                  </Composer>
                </Halo>
              </DockInner>
            </Dock>
            <Help aria-label="Help">?</Help>
          </Main>
        </Site>
      </Window>
    </Desktop>
  );
}
